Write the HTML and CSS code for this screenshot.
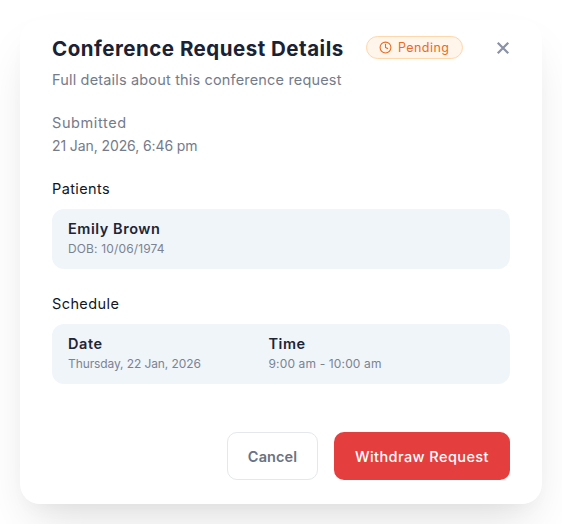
FILE: index.html
```html
<!DOCTYPE html>
<html lang="en">
<head>
<meta charset="utf-8">
<title>Conference Request Details</title>
<link rel="stylesheet" href="styles.css">
</head>
<body>
<main class="card">
  <header class="head">
    <div class="title-row">
      <h1 class="title">Conference Request Details</h1>
      <span class="badge">
        <svg class="badge-icon" viewBox="0 0 24 24" fill="none" stroke="currentColor" stroke-width="2" stroke-linecap="round" stroke-linejoin="round"><circle cx="12" cy="12" r="10"/><path d="M12 6v6l4 2"/></svg>
        Pending
      </span>
      <svg class="close" viewBox="0 0 24 24" fill="none" stroke="currentColor" stroke-width="3" stroke-linecap="butt"><path d="M5 5l14 14M19 5L5 19"/></svg>
    </div>
    <p class="subtitle">Full details about this conference request</p>
  </header>
  <section class="submitted">
    <div class="muted submitted-label">Submitted</div>
    <div class="muted submitted-date">21 Jan, 2026, 6:46 pm</div>
  </section>
  <section class="block">
    <h2 class="label">Patients</h2>
    <div class="panel">
      <div class="cell">
        <div class="strong">Emily Brown</div>
        <div class="small">DOB: 10/06/1974</div>
      </div>
    </div>
  </section>
  <section class="block">
    <h2 class="label">Schedule</h2>
    <div class="panel panel-grid">
      <div class="cell">
        <div class="strong">Date</div>
        <div class="small small-date">Thursday, 22 Jan, 2026</div>
      </div>
      <div class="cell">
        <div class="strong">Time</div>
        <div class="small">9:00 am - 10:00 am</div>
      </div>
    </div>
  </section>
  <footer class="actions">
    <button class="btn btn-cancel" type="button">Cancel</button>
    <button class="btn btn-danger" type="button">Withdraw Request</button>
  </footer>
</main>
</body>
</html>
```
FILE: styles.css
```css
* { box-sizing: border-box; }
html, body { margin: 0; height: 100%; background: #fff; overflow: hidden; }
body {
  font-family: "Inter", "Liberation Sans", sans-serif;
  padding: 20px 20px 0;
  color: #1a2233;
}
.card {
  width: 522px;
  height: 484px;
  padding: 17px 32px 24px;
  background: #fff;
  border-radius: 20px;
  box-shadow: 0 25px 50px -12px rgba(0,0,0,.13), 0 10px 20px -8px rgba(0,0,0,.04);
  display: flex;
  flex-direction: column;
}
.title-row { display: flex; align-items: center; height: 24px; }
.title { margin: 0; font-size: 20.5px; line-height: 24px; font-weight: 700; letter-spacing: .5px; color: #1a2233; white-space: nowrap; }
.badge {
  align-self: flex-start;
  margin: -1px 0 0 22px;
  height: 23px;
  width: 97px;
  display: flex;
  align-items: center;
  justify-content: center;
  gap: 6px;
  font-size: 12.5px;
  font-weight: 400;
  letter-spacing: .45px;
  color: #ea6a1f;
  background: #fff5eb;
  border: 1px solid #fed7aa;
  border-radius: 12px;
}
.badge-icon { width: 13px; height: 13px; flex: none; }
.close { margin: 0 -2px 2px auto; width: 18px; height: 18px; color: #8a93a5; }
.subtitle { margin: 9px 0 0; font-size: 14.5px; line-height: 20px; letter-spacing: .17px; color: #747b8a; }
.submitted { margin-top: 23px; display: flex; flex-direction: column; gap: 3px; }
.muted { font-size: 14px; line-height: 20px; color: #747b8a; }
.submitted-label { font-size: 14.5px; letter-spacing: .6px; }
.submitted-date { letter-spacing: -.1px; }
.block { margin-top: 23px; }
.block + .block { margin-top: 25px; }
.label { margin: 0 0 10px; font-size: 14.5px; line-height: 20px; font-weight: 400; letter-spacing: .4px; color: #11151f; }
.panel { height: 60px; padding: 10px 16px; border-radius: 12px; background: #f0f5fa; }
.panel-grid { display: grid; grid-template-columns: 200.5px 1fr; }
.strong { font-size: 14.5px; line-height: 20px; font-weight: 600; letter-spacing: .55px; color: #1e2535; }
.small { margin-top: 2px; font-size: 12px; line-height: 16px; letter-spacing: .14px; color: #7b8392; }
.small-date { letter-spacing: -.1px; }
.actions { margin-top: auto; display: flex; justify-content: flex-end; gap: 16px; }
.btn { height: 48px; border-radius: 10px; font: 500 14.5px "Inter", "Liberation Sans", sans-serif; cursor: pointer; }
.btn-cancel { width: 91px; background: #fff; border: 1px solid #e5e7eb; color: #6b7280; letter-spacing: .1px; font-weight: 600; }
.btn-danger { width: 176px; background: #e53e3e; border: 0; color: #fff; letter-spacing: .42px; }
```
